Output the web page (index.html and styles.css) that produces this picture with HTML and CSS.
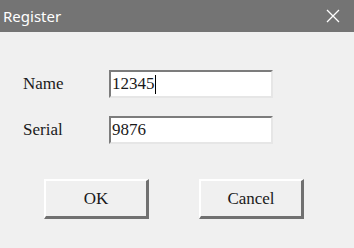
FILE: index.html
```html
<!DOCTYPE html>
<html lang="en">
<head>
    <meta charset="UTF-8">
    <title>Register</title>
    <link rel="stylesheet" href="styles.css">
</head>
<body>
    <div class="dialog">
        <header class="titlebar">
            <span class="title">Register</span>
            <svg class="close" width="14" height="14" viewBox="0 0 14 14">
                <path d="M1 1 L13 13 M13 1 L1 13" stroke="#fff" stroke-width="1.3" fill="none"/>
            </svg>
        </header>
        <form class="form">
            <label class="label">Name</label>
            <div class="field">12345<span class="caret"></span></div>
            <label class="label">Serial</label>
            <div class="field">9876</div>
        </form>
        <div class="buttons">
            <button class="btn" type="button">OK</button>
            <button class="btn" type="button">Cancel</button>
        </div>
    </div>
</body>
</html>
```

FILE: styles.css
```css
* {
    box-sizing: border-box;
    margin: 0;
    padding: 0;
}
body {
    background: #f0f0f0;
    font-family: "Liberation Serif", "Times New Roman", serif;
    color: #1a1a1a;
}
.titlebar {
    height: 32px;
    background: #747474;
    display: flex;
    align-items: center;
    justify-content: space-between;
    padding: 0 14px 0 3px;
}
.title {
    color: #fff;
    font-family: "Noto Sans", "Open Sans", sans-serif;
    font-size: 15px;
}
.form {
    display: grid;
    grid-template-columns: 86px 164px;
    grid-auto-rows: 28px;
    row-gap: 18px;
    align-items: center;
    padding: 38px 0 0 23px;
}
.label {
    font-size: 17px;
}
.field {
    height: 28px;
    background: #fff;
    border-style: solid;
    border-width: 2px 2px 2px 2px;
    border-color: #7c7c7c #e6e6e6 #e6e6e6 #7c7c7c;
    font-size: 17px;
    line-height: 24px;
    padding-left: 1px;
    display: flex;
    align-items: center;
}
.caret {
    display: inline-block;
    width: 1px;
    height: 19px;
    background: #000;
}
.buttons {
    display: flex;
    gap: 50px;
    padding: 35px 0 0 44px;
}
.btn {
    width: 105px;
    height: 40px;
    background: #f0f0f0;
    border-style: solid;
    border-width: 2px 3px 3px 2px;
    border-color: #fff #707070 #707070 #fff;
    font-family: "Liberation Serif", "Times New Roman", serif;
    font-size: 17px;
    color: #1a1a1a;
}
```
